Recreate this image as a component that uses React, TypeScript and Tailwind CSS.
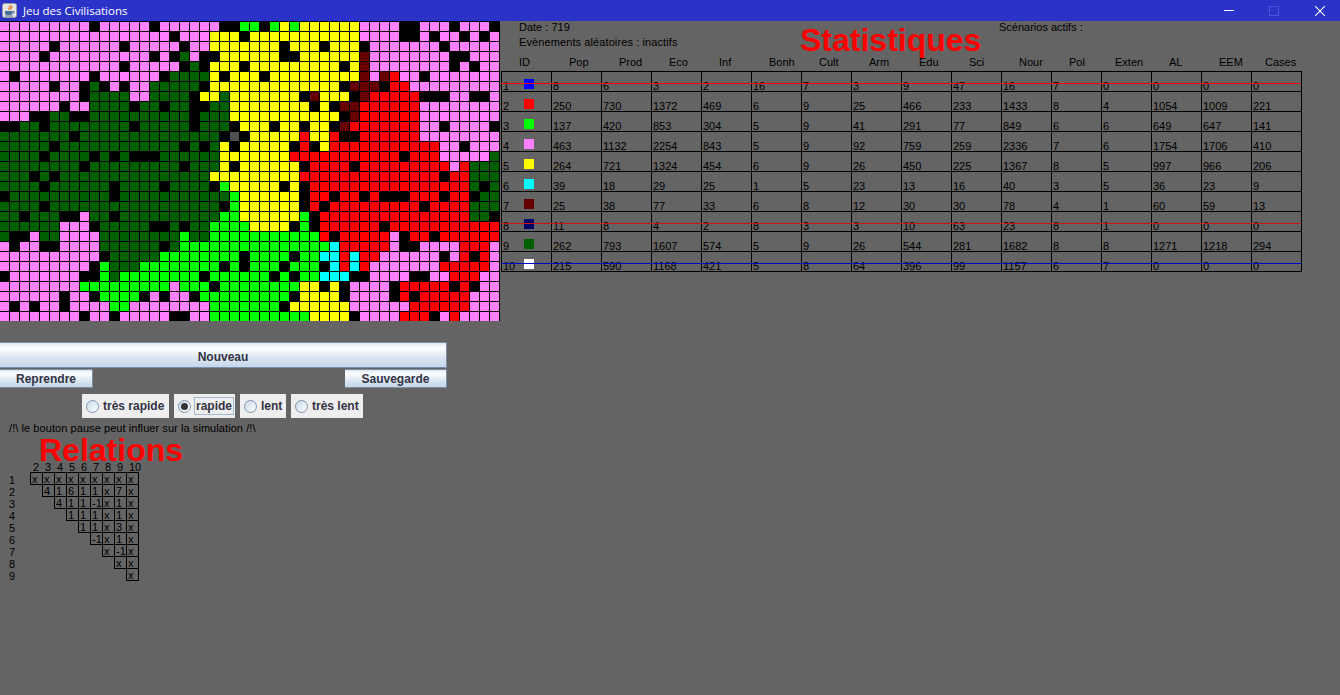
const MAP = [
  '9P K 5P K 6P 2K L L K L Y L 6Y 4P 2K 3P K 3P K',
  '17P K 3P 3Y K 11Y 4P 2K P K 2P K P K P',
  '5P K 6P K 5P K 2P 4Y 3Y K 3Y K 3Y K 7P K 5P',
  '4P K 10P K P K G P 2K 3Y 3Y 2K 6Y D 8P 2K 3P',
  '12P K 5P K G K 3Y K 9Y K Y D 8P K P K 2P',
  'P K 7P K 6P K 4G Y K 2Y Y K 9Y D P D R 2P K 7P',
  '5P K 2P K G K P K 2P 5G K 4Y 9Y K 3D K 2R 9P',
  '8P K 4G 2P 4G K 2Y G 2Y 5Y K D 3Y K D 5R 3K 2P 2K P',
  '6P K 2P 4G K 2G K 2G 2K 2G 2Y 6Y K Y K 2D 6R 8P',
  '3P 2K 2G 2K 10G K 3G 2Y 9Y K D 6R 8P',
  '2K 2G K 8G K 5G K 3G K Y 2Y K 2Y K 2Y K D 7R 2P K 4P K',
  '7G K 14G K A K 5Y R 2Y R 2K 6R 8P',
  '5G K 12G K G K G Y K Y 4Y K R K Y 11R 2P K 3P',
  '4G K 4G K G K G 3K 6G 3Y 4Y 11R K 3R 5P G',
  '8G K 9G K 3G Y K Y 5Y K 4R K 9R P R 3G',
  '3G K G K 15G 4Y 5Y 14R K 2R 3G',
  '4G K 6G K 4G K 4G K L 2Y 3Y K Y K 16R G K G',
  'K 10G K 11G L Y 5Y K 2R K 2R K R 3K 3R K 2R K 2G',
  '4G K 17G K L Y 5Y K R K 9R K 4R 3G',
  '2G K 3G 2K P 2G K 10G 2L Y 5Y L K 15R 2G K',
  '6G 3P K 5G 2K G K 2G 4L 4Y K L K 6R K 11R',
  'G 2K P 2G 4P 8G L 2G 4L 7L R K 5R P K 2R K 6R',
  'P K 2P 2K 4P 6G K G 7L 8L C 5R P 2K 4P 3R P',
  '10P K 5G 8L K 4L K 2L 2C R C 2R 6P K P R K R P',
  '9P K L 3G 8L K L K 3L K 3L K C R C R 7P 5R P',
  'K 7P 2K L G 8L K 4L 2L K L K 2L 3C 2K 4P 2K 2P 3R 2P',
  '8P 9L P 3L K 3L 5L 2Y K Y K 4P K 5R K R K 2P',
  '6P K 2P K 4L K P K 2P K 5L 4L K 4Y K 4P K R K 5R 3P',
  'P K P K 2P K 4P 2L 8P 4L 3L K 6Y 6P 6R 3P',
  '8P K 2P K 5P 2K 2P 4L 6L 4Y K 4P 3R K P R 4P',
];

const CELL: Record<string, string> = {
  P: 'bg-[#ff80ff]',
  K: 'bg-black',
  G: 'bg-[#006000]',
  Y: 'bg-[#ffff00]',
  L: 'bg-[#00ff00]',
  R: 'bg-[#ff0000]',
  D: 'bg-[#660000]',
  C: 'bg-[#00ffff]',
  A: 'bg-[#505050]',
};

// "3P K" -> P P P K
const cells = MAP.flatMap((row) =>
  row.split(' ').flatMap((tok) => {
    const n = tok.length > 1 ? parseInt(tok, 10) : 1;
    return Array<string>(n).fill(tok[tok.length - 1]);
  }),
);

const HEADERS = ['ID', 'Pop', 'Prod', 'Eco', 'Inf', 'Bonh', 'Cult', 'Arm', 'Edu', 'Sci', 'Nour', 'Pol', 'Exten', 'AL', 'EEM', 'Cases'];

const STATS = [
  { swatch: 'bg-[#0000ff]', strike: 'bg-[#ff0000]', v: [8, 6, 3, 2, 16, 7, 3, 9, 47, 16, 7, 0, 0, 0, 0] },
  { swatch: 'bg-[#ff0000]', v: [250, 730, 1372, 469, 6, 9, 25, 466, 233, 1433, 8, 4, 1054, 1009, 221] },
  { swatch: 'bg-[#00ff00]', v: [137, 420, 853, 304, 5, 9, 41, 291, 77, 849, 6, 6, 649, 647, 141] },
  { swatch: 'bg-[#ff80ff]', v: [463, 1132, 2254, 843, 5, 9, 92, 759, 259, 2336, 7, 6, 1754, 1706, 410] },
  { swatch: 'bg-[#ffff00]', v: [264, 721, 1324, 454, 6, 9, 26, 450, 225, 1367, 8, 5, 997, 966, 206] },
  { swatch: 'bg-[#00ffff]', v: [39, 18, 29, 25, 1, 5, 23, 13, 16, 40, 3, 5, 36, 23, 9] },
  { swatch: 'bg-[#660000]', v: [25, 38, 77, 33, 6, 8, 12, 30, 30, 78, 4, 1, 60, 59, 13] },
  { swatch: 'bg-[#000066]', strike: 'bg-[#c81414]', v: [11, 8, 4, 2, 8, 3, 3, 10, 63, 23, 8, 1, 0, 0, 0] },
  { swatch: 'bg-[#006000]', v: [262, 793, 1607, 574, 5, 9, 26, 544, 281, 1682, 8, 8, 1271, 1218, 294] },
  { swatch: 'bg-white', strike: 'bg-[#0000cc]', v: [215, 590, 1168, 421, 5, 8, 64, 396, 99, 1157, 6, 7, 0, 0, 0] },
];

const RELATIONS = [
  'x x x x x x x x x',
  '4 1 6 1 1 x 7 x',
  '4 1 1 -1 x 1 x',
  '1 1 1 x 1 x',
  '1 1 x 3 x',
  '-1 x 1 x',
  'x -1 x',
  'x x',
  'x',
].map((r) => r.split(' '));

const btn =
  'border border-[#7a8fa6] border-l-0 bg-[linear-gradient(180deg,#dce8f3_0%,#ffffff_22%,#dfe9f3_55%,#c4d7ea_100%)] text-[12px] font-bold text-[#333344] flex items-center justify-center';

function JavaIcon() {
  return (
    <svg width="15" height="15" viewBox="0 0 15 15" className="shrink-0">
      <rect x="0.5" y="0.5" width="14" height="14" rx="2" fill="#e4e4e4" stroke="#9a9a9a" />
      <path d="M8 2c1 2-2 3-1 5M10 3c0 2-2 2-1 4" stroke="#e0701c" strokeWidth="1.3" fill="none" />
      <path d="M3 8h7.500v2a2 2 0 0 1-2 2h-3.500a2 2 0 0 1-2-2z" fill="#4a6f98" />
      <path d="M10.500 8.500h1.500v1.500h-1.500" stroke="#4a6f98" fill="none" />
      <path d="M3 13h8" stroke="#4a6f98" />
    </svg>
  );
}

function Radio({ label, checked, className }: { label: string; checked?: boolean; className: string }) {
  return (
    <div className={`h-6 bg-[#eeeeee] flex items-center pl-1 text-[12px] font-bold text-[#333344] ${className}`}>
      <span className="w-[13px] h-[13px] shrink-0 rounded-full border border-[#7f95ad] bg-[linear-gradient(135deg,#c9d8e8,#ffffff)] flex items-center justify-center">
        {checked && <span className="w-[7px] h-[7px] rounded-full bg-[#333333]" />}
      </span>
      {checked ? (
        <span className="ml-[3px] h-[18px] px-px border border-[#a3b8cc] flex items-center">{label}</span>
      ) : (
        <span className="ml-[4px]">{label}</span>
      )}
    </div>
  );
}

export default function App() {
  return (
    <div className="w-[1340px] h-[695px] overflow-hidden bg-[#646464] text-black font-['Liberation_Sans',Arial,sans-serif]">
      {/* title bar */}
      <div className="h-[21px] bg-[#2a32c8] flex items-center pl-[2px] text-white">
        <JavaIcon />
        <span className="ml-[6px] text-[11.5px] font-['Open_Sans',sans-serif] leading-none">Jeu des Civilisations</span>
        <div className="ml-auto flex items-center pr-[15px]">
          <span className="w-[10px] h-px bg-white" />
          <span className="ml-[35px] w-[10px] h-[10px] border border-[#4d55dd]" />
          <svg width="10" height="10" viewBox="0 0 10 10" className="ml-[36px]">
            <path d="M0 0l10 10M10 0L0 10" stroke="#ffffff" strokeWidth="1.1" />
          </svg>
        </div>
      </div>

      <div className="flex">
        {/* left column */}
        <div className="w-[500px] shrink-0">
          <div className="bg-black pt-px grid grid-cols-[repeat(50,9px)] auto-rows-[9px] gap-px">
            {cells.map((c, i) => (
              <div key={i} className={CELL[c]} />
            ))}
          </div>

          <div className="w-[447px] mt-[21px]">
            <div className={`${btn} h-[26px] pt-[3px]`}>Nouveau</div>
            <div className="mt-px flex justify-between">
              <div className={`${btn} w-[93px] h-[19px] pt-px`}>Reprendre</div>
              <div className={`${btn} w-[102px] h-[19px] pt-px border-l`}>Sauvegarde</div>
            </div>
            <div className="mt-[6px] w-[445px] flex justify-center gap-[5px]">
              <Radio label="très rapide" className="w-[87px]" />
              <Radio label="rapide" checked className="w-[61px]" />
              <Radio label="lent" className="w-[46px]" />
              <Radio label="très lent" className="w-[72px]" />
            </div>
          </div>

          <div className="mt-[4px] pl-[9px] text-[11px] leading-3 tracking-[0.07px]">/!\ le bouton pause peut influer sur la simulation /!\</div>
          <div className="pl-[39px] text-[32px] leading-8 font-bold text-[#ff0000]">Relations</div>

          <div className="-mt-[5px] grid grid-cols-[30px_repeat(9,12px)] grid-rows-[11px_repeat(9,12px)] text-[11px] leading-3">
            <div />
            {[2, 3, 4, 5, 6, 7, 8, 9, 10].map((n) => (
              <div key={n} className="pl-[3px] whitespace-nowrap">{n}</div>
            ))}
            {RELATIONS.map((row, i) => [
              <div key={`l${i}`} className="pl-[9px] pt-[2px]" style={{ gridRow: i + 2, gridColumn: 1 }}>{i + 1}</div>,
              ...row.map((v, j) => (
                <div
                  key={`${i}-${j}`}
                  className="w-[13px] h-[13px] border border-black pl-px leading-[12px] whitespace-nowrap"
                  style={{ gridRow: i + 2, gridColumn: i + j + 2 }}
                >
                  {v}
                </div>
              )),
            ])}
          </div>
        </div>

        {/* stats column */}
        <div className="relative flex-1 text-[11px] leading-3">
          <div className="flex">
            <div className="w-[499px] pl-[19px]">Date : 719</div>
            <div>Scénarios actifs :</div>
          </div>
          <div className="mt-[3px] pl-[19px] tracking-[0.1px]">Evènements aléatoires : inactifs</div>
          <div className="absolute left-[300px] top-[3px] text-[32px] leading-8 font-bold text-[#ff0000]">Statistiques</div>

          <div className="mt-[8px] ml-px grid grid-cols-[repeat(16,50px)]">
            {HEADERS.map((h) => (
              <div key={h} className={h === 'Exten' || h === 'Cases' ? 'pl-[14px]' : 'pl-[18px]'}>{h}</div>
            ))}
          </div>

          <div className="mt-[3px] ml-px w-[801px] border-t border-l border-black leading-[10px]">
            {STATS.map((row, i) => (
              <div key={i} className="relative grid grid-cols-[repeat(16,50px)] h-5">
                <div className="border-r border-b border-black flex items-end">
                  <span className="w-[22px] pl-px">{i + 1}</span>
                  <span className={`w-2.5 h-2.5 self-start mt-[7px] ${row.swatch}`} />
                </div>
                {row.v.map((v, j) => (
                  <div key={j} className="border-r border-b border-black flex items-end pl-px">{v}</div>
                ))}
                {row.strike && <div className={`absolute -left-px top-[11px] w-[800px] h-px ${row.strike}`} />}
              </div>
            ))}
          </div>
        </div>
      </div>
    </div>
  );
}
